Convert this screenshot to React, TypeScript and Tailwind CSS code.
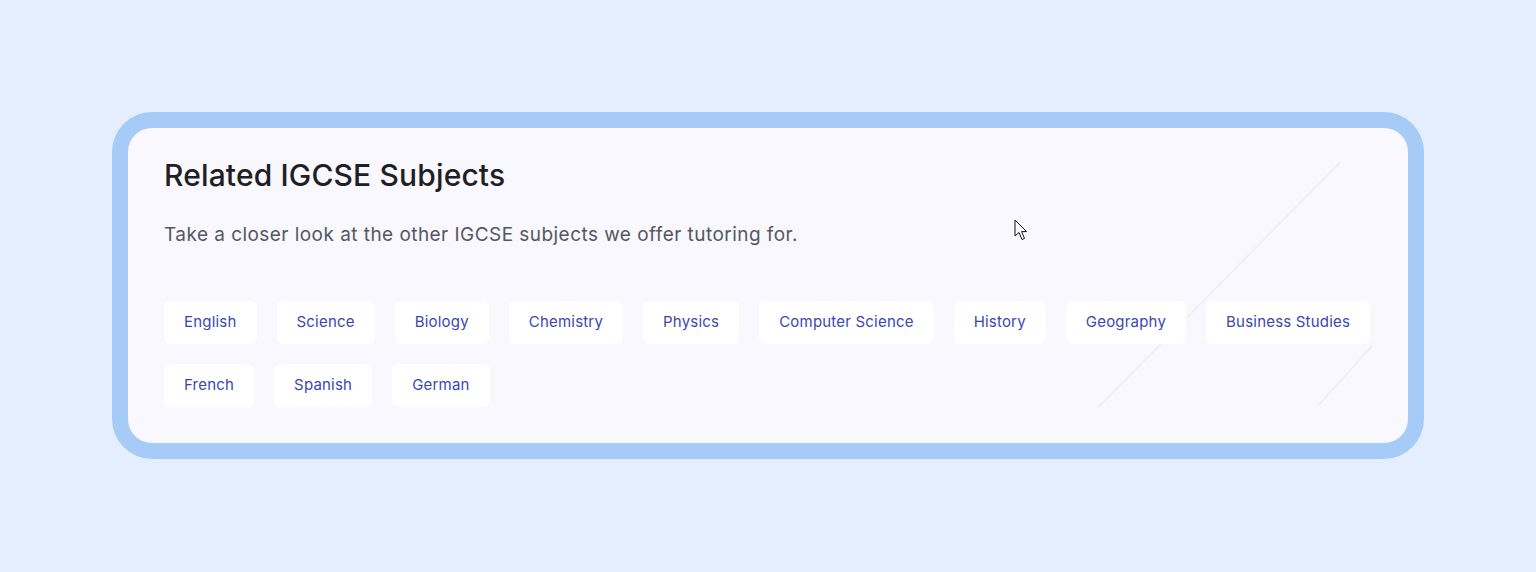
const subjects = [
  'English',
  'Science',
  'Biology',
  'Chemistry',
  'Physics',
  'Computer Science',
  'History',
  'Geography',
  'Business Studies',
  'French',
  'Spanish',
  'German',
]

function Decoration() {
  // faint diagonal strokes behind the chips
  return (
    <svg
      className="pointer-events-none absolute right-0 top-0 h-full w-[360px]"
      viewBox="0 0 360 316"
      fill="none"
    >
      <path d="M292 35 L50 280" stroke="#efeff6" strokeWidth="2" strokeLinecap="round" />
      <path d="M324 219 L272 277" stroke="#efeff6" strokeWidth="2" strokeLinecap="round" />
    </svg>
  )
}

function Cursor() {
  return (
    <svg className="pointer-events-none absolute left-[886px] top-[91px]" width="16" height="24" viewBox="0 0 16 24">
      <path
        d="M1 1 L1 17 L5 13.5 L8 20.5 L10.5 19.5 L7.6 12.6 L12.5 12.6 Z"
        fill="#ffffff"
        stroke="#111111"
        strokeWidth="1"
        strokeLinejoin="round"
      />
    </svg>
  )
}

export default function App() {
  return (
    <div className="min-h-[572px] w-full bg-[#e4eeff] px-[112px] pt-[112px]" style={{ fontFamily: 'Inter, "Open Sans", sans-serif' }}>
      <div className="rounded-[40px] bg-[#a7cbf7] p-4">
        <div className="relative overflow-hidden rounded-[24px] bg-[#f8f8fe] px-9 pb-9 pt-[29px]">
          <Decoration />
          <Cursor />
          <div className="relative">
            <h2 className="text-[30px] font-medium leading-9 tracking-[0.15px] text-[#1f2024]">Related IGCSE Subjects</h2>
            <p className="mt-7 text-[19px] leading-7 tracking-[0.45px] text-[#55575f]">
              Take a closer look at the other IGCSE subjects we offer tutoring for.
            </p>
            <div className="mt-[52px] flex flex-wrap gap-x-5 gap-y-5">
              {subjects.map((s) => (
                <span
                  key={s}
                  className="flex h-[43px] items-center rounded-md bg-white px-5 text-[15px] tracking-[0.2px] text-[#3a47b3]"
                >
                  {s}
                </span>
              ))}
            </div>
          </div>
        </div>
      </div>
    </div>
  )
}
